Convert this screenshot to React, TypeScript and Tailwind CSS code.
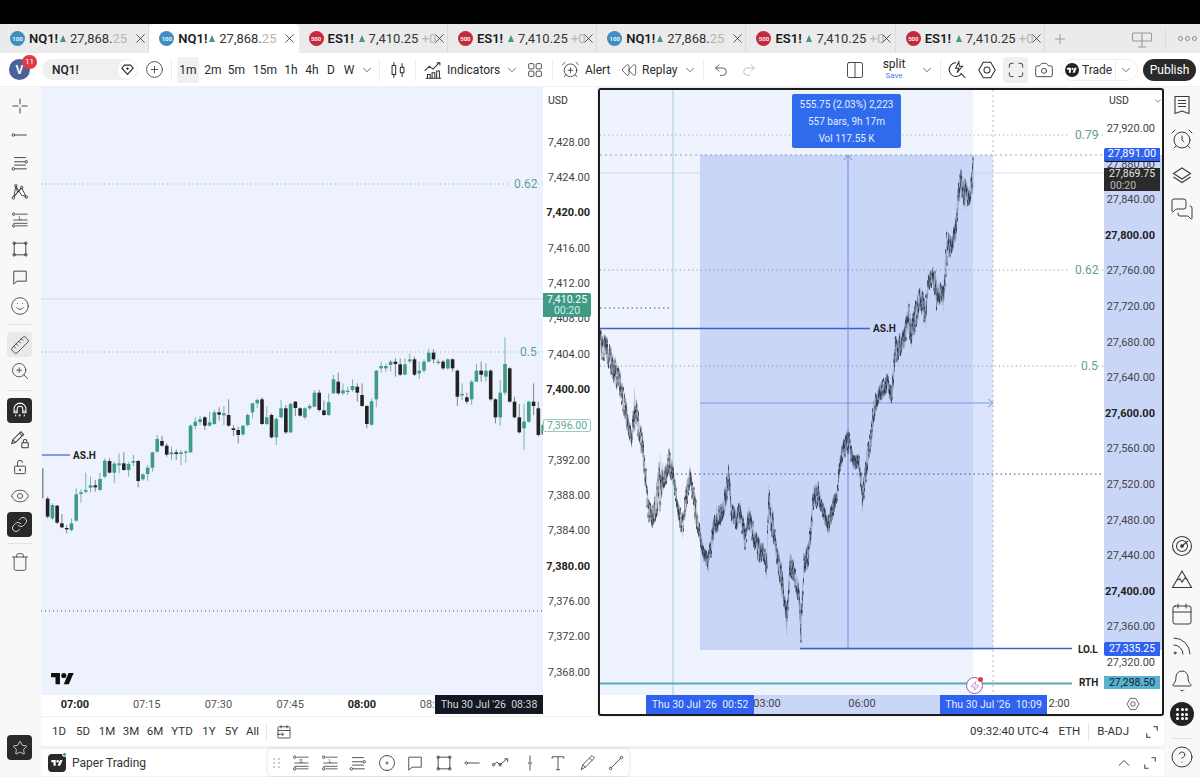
import type { ReactNode } from "react";
import {
  AlarmClock,
  AlarmClockPlus,
  Bell,
  Calendar,
  Camera,
  ChevronDown,
  ChevronUp,
  CircleHelp,
  CirclePlus,
  Columns2,
  Eye,
  Link,
  MessagesSquare,
  Plus,
  Redo2,
  Rewind,
  Rss,
  Ruler,
  Smile,
  Star,
  Trash,
  Undo2,
  X,
  Zap,
  ZoomIn,
} from "lucide-react";

// small line icon on a 24 box
function Ico({ children, className = "h-5 w-5" }: { children: ReactNode; className?: string }) {
  return (
    <svg viewBox="0 0 24 24" fill="none" stroke="currentColor" strokeWidth={1.1} className={className}>
      {children}
    </svg>
  );
}

function TvLogo({ className }: { className: string }) {
  return (
    <svg viewBox="0 0 36 22" fill="currentColor" className={className}>
      <path d="M14 21H7V10H0V3h14v18zM28 21h-8l7.5-18h8L28 21z" />
      <circle cx="20" cy="7" r="4" />
    </svg>
  );
}

const Dot = ({ x, y }: { x: number; y: number }) => <circle cx={x} cy={y} r={1.5} />;

const IconLine = () => (
  <Ico><Dot x={4} y={12} /><path d="M5.5 12H20" /></Ico>
);
const IconFork = () => (
  <Ico><path d="M5 5.5h14M5 10.5h13M5 14.5h14M6 19h14" /><Dot x={19.5} y={10.5} /><Dot x={4} y={19} /></Ico>
);
const IconXabcd = () => (
  <Ico>
    <path d="M7 5l-2.5 13L9 12l5-5 5 10M7 5l7 11 5 1M9 12L7 5M14 7L4.5 18" />
    <Dot x={7} y={4.5} /><Dot x={14} y={6.5} /><Dot x={4} y={19} /><Dot x={19.5} y={18} />
  </Ico>
);
const IconLong = ({ letter }: { letter: string }) => (
  <Ico>
    <path d="M7 5h14M4 12h17M7 19h14M4 16h17" strokeWidth={1} />
    <Dot x={4.5} y={5} /><Dot x={4.5} y={19} />
    <text x={12} y={12} fontSize={7} fill="currentColor" stroke="none" textAnchor="middle">{letter}</text>
  </Ico>
);
const IconRect = () => (
  <Ico><rect x={5} y={5} width={14} height={14} /><Dot x={5} y={5} /><Dot x={19} y={5} /><Dot x={5} y={19} /><Dot x={19} y={19} /></Ico>
);
const IconComment = () => (
  <Ico><path d="M4.5 5h15v12H8.5l-4 3.5z" /></Ico>
);
const IconPath = () => (
  <Ico><path d="M3 14l4-3 4 3 8-7M16 7h4v4" /><Dot x={3} y={14} /><Dot x={11} y={14} /></Ico>
);
const IconVert = () => (
  <Ico><path d="M12 3v6.5M12 14.5V21" /><Dot x={12} y={12} /></Ico>
);
const IconText = () => (
  <Ico><path d="M5 7V4.5h14V7M12 4.5V20M9.5 20h5" /></Ico>
);
const IconBrush = () => (
  <Ico><path d="M5 20l2-6L18 3l3 3-11 11zM7 14l3 3M15 6l3 3" /></Ico>
);
const IconRay = () => (
  <Ico><path d="M6.5 17.5L17.5 6.5" /><Dot x={5.5} y={18.5} /><Dot x={18.5} y={5.5} /></Ico>
);
const IconMagnet = () => (
  <Ico className="h-[22px] w-[22px]">
    <path d="M5.5 15V11a6.5 6.5 0 0 1 13 0v4h-3.5v-4a3 3 0 0 0-6 0v4zM5.5 13h3.5M15 13h3.5M7 17l.6 2M17 17l-.6 2M11 17l.5 1.5 1-1.5" />
  </Ico>
);
const IconPencilLock = () => (
  <Ico className="h-[22px] w-[22px]">
    <path d="M3 17l1-4 9-9 3 3-9 9zM4 13l3 3M11.5 5.5l3 3" />
    <rect x={14} y={16} width={7} height={5.5} rx={0.5} />
    <path d="M15.5 16v-1.5a2 2 0 0 1 4 0V16" />
  </Ico>
);
const IconLockOpen = () => (
  <Ico>
    <rect x={5.5} y={11} width={13} height={9} rx={1} />
    <path d="M9 11V7a3 3 0 0 1 6 0" />
    <circle cx={12} cy={15.5} r={0.8} fill="currentColor" />
  </Ico>
);
const IconDiamond = () => (
  <Ico className="h-[15px] w-[15px]">
    <path d="M3 10l4-5h10l4 5-9 10z" strokeWidth={1.8} />
    <circle cx={12} cy={10.5} r={1.5} fill="currentColor" />
  </Ico>
);
const IconCandles = () => (
  <Ico className="h-[22px] w-[22px]">
    <rect x={5.5} y={7} width={4} height={10} rx={0.5} />
    <path d="M7.5 3.5V7M7.5 17v3.5M16.5 4.5V9M16.5 15v4.5" />
    <rect x={14.5} y={9} width={4} height={6} rx={0.5} />
  </Ico>
);
const IconIndicators = () => (
  <Ico className="h-[22px] w-[22px]">
    <path d="M3 13l5-5 4 3 7-7M16 4h3.5v3" />
    <path d="M6 21v-4h3v4M11 21v-6h3v6M16 21v-8h3v8M4 21h17" />
  </Ico>
);
const IconGrid = () => (
  <Ico className="h-[18px] w-[18px]">
    <rect x={3.5} y={3.5} width={7} height={7} rx={1.4} />
    <rect x={13.5} y={3.5} width={7} height={7} rx={1.4} />
    <rect x={3.5} y={13.5} width={7} height={7} rx={1.4} />
    <rect x={13.5} y={13.5} width={7} height={7} rx={1.4} />
  </Ico>
);
const IconQuick = () => (
  <Ico className="h-[22px] w-[22px]">
    <path d="M11 4a7.5 7.5 0 1 0 6 12M16 15.5l5 5" />
    <path d="M14 3l-3.5 7h3.5l-2 5 6-7h-3.5z" />
  </Ico>
);
const IconHex = ({ className = "h-[22px] w-[22px]" }: { className?: string }) => (
  <Ico className={className}>
    <path d="M8 3.5h8l5 8.5-5 8.5H8L3 12z" />
    <circle cx={12} cy={12} r={3.3} />
  </Ico>
);
const IconCorners = ({ className = "h-[20px] w-[20px]" }: { className?: string }) => (
  <Ico className={className}>
    <path d="M4 9V6.5A2.5 2.5 0 0 1 6.5 4H9M15 4h2.5A2.5 2.5 0 0 1 20 6.5V9M20 15v2.5a2.5 2.5 0 0 1-2.5 2.5H15M9 20H6.5A2.5 2.5 0 0 1 4 17.5V15" />
  </Ico>
);
const IconExpand = () => (
  <Ico className="h-[18px] w-[18px]">
    <path d="M14 5h5v5M5 14v5h5" strokeWidth={1.4} />
  </Ico>
);
const IconBoard = () => (
  <Ico className="h-[24px] w-[24px]">
    <rect x={2.5} y={6} width={19} height={8} rx={1} />
    <path d="M12 6v14M8 20h8" />
  </Ico>
);
const IconWatch = () => (
  <Ico className="h-[24px] w-[24px]">
    <path d="M5 3.5h14v17l-7-2.5-7 2.5zM8 7.5h8M8 10.5h8M8 13.5h8" />
  </Ico>
);
const IconLayers = () => (
  <Ico className="h-[24px] w-[24px]">
    <path d="M12 5l8.5 5.5L12 16l-8.5-5.5zM3.5 14l8.5 5.5 8.5-5.5" />
  </Ico>
);
const IconRadar = () => (
  <Ico className="h-[24px] w-[24px]">
    <circle cx={12} cy={12} r={9.5} />
    <circle cx={12} cy={12} r={5.5} />
    <circle cx={12} cy={12} r={1.3} fill="currentColor" />
    <path d="M12 12l6-5" />
  </Ico>
);
const IconPeaks = () => (
  <Ico className="h-[24px] w-[24px]">
    <path d="M2.5 20.5L12 4l9.5 16.5zM7 13l3-1 2 3 3-4 3 2" />
  </Ico>
);

const iconClass = "h-5 w-5";

function ToolBtn({ children }: { children: ReactNode }) {
  return <div className="flex h-[28.5px] w-full items-center justify-center text-[#3a3a3a]">{children}</div>;
}

function Sep() {
  return <div className="mx-auto my-[4px] h-px w-[26px] bg-[#e3e3e3]" />;
}

const TABS = [
  { sym: "NQ1!", price: "27,868.", tail: "25", red: false, active: false },
  { sym: "NQ1!", price: "27,868.", tail: "25", red: false, active: true },
  { sym: "ES1!", price: "7,410.25", tail: " +0", red: true, active: false },
  { sym: "ES1!", price: "7,410.25", tail: " +0", red: true, active: false },
  { sym: "NQ1!", price: "27,868.", tail: "25", red: false, active: false },
  { sym: "ES1!", price: "7,410.25", tail: " +0", red: true, active: false },
  { sym: "ES1!", price: "7,410.25", tail: " +0", red: true, active: false },
];

function Tabs() {
  return (
    <div className="flex h-[29px] shrink-0 items-stretch bg-[#ebebeb] text-[13px]">
      {TABS.map((t, i) => (
        <div
          key={i}
          className={`flex w-[149.3px] items-center pl-[10px] ${
            t.active ? "rounded-t-[5px] bg-white" : "border-r border-[#dcdcdc]"
          }`}
        >
          <span
            className={`flex h-[15px] w-[15px] shrink-0 items-center justify-center rounded-full text-[6px] font-semibold text-white ${
              t.red ? "bg-[#c42a3c]" : "bg-[#3c8fbe]"
            }`}
          >
            {t.red ? "500" : "100"}
          </span>
          <span className="ml-[4px] w-[26px] font-semibold text-[#1b1b1b]">{t.sym}</span>
          <span className="ml-[5px] h-0 w-0 border-x-[3.5px] border-b-[7px] border-x-transparent border-b-[#3f9a86]" />
          <span className="ml-[4px] w-[62px] whitespace-pre text-[#333]">
            {t.price}
            <span className="text-[#b5b5b5]">{t.tail}</span>
          </span>
          <X className="ml-[1px] h-[15px] w-[15px] shrink-0 text-[#333]" strokeWidth={1.3} />
        </div>
      ))}
      <div className="flex flex-1 items-center text-[#777]">
        <Plus className="ml-[7px] h-[16px] w-[16px]" strokeWidth={1} />
        <div className="ml-[62px] text-[#999]"><IconBoard /></div>
        <div className="ml-[11px] h-[22px] w-px bg-[#dcdcdc]" />
        <div className="ml-[12px] flex gap-[2px]">
          <span className="h-[5px] w-[5px] rounded-full border border-[#888]" />
          <span className="h-[5px] w-[5px] rounded-full border border-[#888]" />
          <span className="h-[5px] w-[5px] rounded-full border border-[#888]" />
        </div>
      </div>
    </div>
  );
}

const VDiv = ({ className }: { className: string }) => <div className={`h-[22px] w-px bg-[#ececec] ${className}`} />;
const Chev = ({ className }: { className: string }) => (
  <ChevronDown className={`h-[14px] w-[14px] text-[#444] ${className}`} strokeWidth={1.3} />
);

function TopBar() {
  return (
    <div className="flex h-[33px] shrink-0 items-center bg-white pl-[9px] pr-[4px] text-[12px] text-[#2b2b2b]">
      <div className="relative h-[21px] w-[23px]">
        <div className="flex h-[21px] w-[21px] items-center justify-center rounded-full bg-[#4a6298] text-[12px] font-semibold text-white">
          V
        </div>
        <div className="absolute left-[13px] top-[-4px] flex h-[14px] w-[15px] items-center justify-center rounded-full bg-[#e23a45] text-[8px] text-white">
          11
        </div>
      </div>
      <div className="ml-[10px] flex h-[21px] w-[96px] items-center justify-between rounded-full bg-[#f0f0f0] pl-[10px] pr-[1px]">
        <span className="font-semibold">NQ1!</span>
        <span className="flex h-[19px] w-[19px] items-center justify-center rounded-full bg-white"><IconDiamond /></span>
      </div>
      <CirclePlus className="ml-[7px] h-[19px] w-[19px]" strokeWidth={1} />
      <VDiv className="ml-[7px]" />
      <div className="ml-[5px] flex h-[26px] w-[22px] items-center justify-center rounded-[3px] bg-[#f0f0f0]">1m</div>
      <div className="ml-[3px] w-[22px] text-center">2m</div>
      <div className="w-[25px] text-center">5m</div>
      <div className="w-[32px] text-center">15m</div>
      <div className="w-[20px] text-center">1h</div>
      <div className="w-[22px] text-center">4h</div>
      <div className="w-[16px] text-center">D</div>
      <div className="w-[20px] text-center">W</div>
      <Chev className="ml-[1px]" />
      <VDiv className="ml-[5px]" />
      <div className="ml-[7px]"><IconCandles /></div>
      <VDiv className="ml-[6px]" />
      <div className="ml-[6px]"><IconIndicators /></div>
      <span className="ml-[3px] w-[48px]">Indicators</span>
      <Chev className="ml-[10px]" />
      <div className="ml-[7px]"><IconGrid /></div>
      <VDiv className="ml-[8px]" />
      <AlarmClockPlus className="ml-[8px] h-[19px] w-[19px]" strokeWidth={1} />
      <span className="ml-[5px] w-[23px]">Alert</span>
      <Rewind className="ml-[13px] h-[16px] w-[16px]" strokeWidth={1.1} />
      <span className="ml-[5px] w-[32px]">Replay</span>
      <Chev className="ml-[9px]" />
      <VDiv className="ml-[6px]" />
      <Undo2 className="ml-[9px] h-[16px] w-[16px]" strokeWidth={1.1} />
      <Redo2 className="ml-[12px] h-[16px] w-[16px] text-[#aaa]" strokeWidth={1.1} />
      <div className="ml-auto flex items-center">
        <Columns2 className="h-[20px] w-[20px]" strokeWidth={1} />
        <div className="ml-[14px] w-[30px] text-center leading-[11px]">
          <div>split</div>
          <div className="text-[8px] text-[#4f7ef0]">Save</div>
        </div>
        <Chev className="ml-[11px]" />
        <VDiv className="ml-[6px]" />
        <div className="ml-[5px]"><IconQuick /></div>
        <div className="ml-[8px]"><IconHex /></div>
        <div className="ml-[5px] flex h-[26px] w-[25px] items-center justify-center rounded-[3px] bg-[#f0f0f0]"><IconCorners /></div>
        <Camera className="ml-[6px] h-[20px] w-[20px]" strokeWidth={1} />
        <div className="ml-[7px] flex h-[22px] w-[77px] items-center rounded-full border border-[#f0f0f0] pl-[3px]">
          <span className="flex h-[14px] w-[14px] items-center justify-center rounded-full bg-[#222] text-white"><TvLogo className="h-[6px] w-[10px]" /></span>
          <span className="ml-[3px] w-[27px]">Trade</span>
          <VDiv className="ml-[6px]" />
          <Chev className="ml-[3px]" />
        </div>
        <div className="ml-[5px] flex h-[22px] w-[53px] items-center justify-center rounded-full bg-[#2a2a2a] text-[12px] text-white">Publish</div>
      </div>
    </div>
  );
}

function LeftBar() {
  return (
    <aside className="flex w-[41px] shrink-0 flex-col bg-[#f8f8f8] pt-[5px] pr-[2px] pb-[17px]">
      <ToolBtn><Ico><path d="M12 3v7M12 14v7M3 12h7M14 12h7" /></Ico></ToolBtn>
      <ToolBtn><IconLine /></ToolBtn>
      <ToolBtn><IconFork /></ToolBtn>
      <ToolBtn><IconXabcd /></ToolBtn>
      <ToolBtn><IconLong letter="L" /></ToolBtn>
      <ToolBtn><IconRect /></ToolBtn>
      <ToolBtn><IconComment /></ToolBtn>
      <ToolBtn><Smile className={iconClass} strokeWidth={1} /></ToolBtn>
      <Sep />
      <div className="mx-auto mt-[3px] flex h-[25px] w-[25px] items-center justify-center rounded-[4px] bg-[#e9e9e9] text-[#333]">
        <Ruler className="h-[20px] w-[20px] -scale-x-100" strokeWidth={1} />
      </div>
      <ToolBtn><ZoomIn className={iconClass} strokeWidth={1} /></ToolBtn>
      <Sep />
      <div className="mx-auto mt-[3px] flex h-[25px] w-[25px] items-center justify-center rounded-[4px] bg-[#2a2a2a] text-white"><IconMagnet /></div>
      <div className="mt-[2px]" />
      <ToolBtn><IconPencilLock /></ToolBtn>
      <ToolBtn><IconLockOpen /></ToolBtn>
      <ToolBtn><Eye className={iconClass} strokeWidth={1} /></ToolBtn>
      <div className="mx-auto mt-[2px] flex h-[25px] w-[25px] items-center justify-center rounded-[4px] bg-[#2a2a2a] text-white">
        <Link className="h-[17px] w-[17px]" strokeWidth={1.1} />
      </div>
      <div className="mt-[2px]" />
      <Sep />
      <ToolBtn><Trash className={iconClass} strokeWidth={1} /></ToolBtn>
      <div className="mx-auto mt-auto flex h-[25px] w-[25px] items-center justify-center rounded-[4px] bg-[#2a2a2a] text-white">
        <Star className="h-[16px] w-[16px]" strokeWidth={1.1} />
      </div>
    </aside>
  );
}

// candles read off the reference: green?, body top, body bottom, wick top, wick bottom (crop coordinates)
const CANDLES: [number, number, number, number, number][] = [
  [0,415,505,415,505],[0,506,560,500,565],[1,525,565,520,570],[0,527,578,525,582],[0,580,592,552,595],
  [0,594,598,585,610],[1,580,600,565,605],[1,493,572,475,575],[1,487,492,478,518],[1,480,485,428,490],
  [1,466,473,440,487],[0,466,472,450,485],[1,447,480,428,482],[1,392,440,385,445],[0,393,428,385,430],
  [1,401,428,395,460],[1,400,406,370,430],[0,400,420,367,422],[1,402,420,395,440],[1,393,398,375,410],
  [0,393,453,390,472],[1,433,448,430,452],[1,413,432,405,452],[1,367,413,365,425],[1,327,365,315,368],
  [0,333,347,318,350],[0,347,374,340,380],[1,367,373,350,390],[0,367,372,358,390],[1,367,372,360,405],
  [1,365,368,360,398],[1,287,367,283,368],[1,275,288,262,298],[1,268,276,258,285],[0,262,287,258,300],
  [1,277,287,245,290],[1,247,282,240,285],[0,247,254,232,272],[1,250,256,228,285],[0,255,287,208,290],
  [0,295,300,285,318],[0,300,315,290,340],[1,287,313,285,318],[1,255,285,250,290],[1,220,247,218,265],
  [1,210,220,205,235],[0,208,282,202,285],[1,262,282,228,285],[0,255,322,250,325],[1,267,322,262,345],
  [1,235,262,210,265],[0,235,307,225,312],[1,222,307,218,310],[0,215,234,213,258],[0,235,257,232,260],
  [1,235,262,232,268],[1,228,235,222,240],[1,188,230,180,232],[0,188,240,180,245],[0,241,255,212,258],
  [1,217,255,190,258],[1,148,190,135,192],[0,155,190,128,195],[1,181,190,160,195],[1,182,186,170,195],
  [1,168,180,148,185],[0,170,188,160,215],[0,195,228,160,230],[0,228,282,225,295],[1,214,284,205,288],
  [1,122,208,120,232],[1,108,115,95,128],[1,108,115,100,125],[1,95,105,90,125],[0,95,102,85,140],
  [0,103,134,85,138],[1,103,134,85,135],[1,88,94,70,100],[0,88,134,80,138],[1,122,130,95,147],
  [1,95,122,88,128],[1,68,95,57,97],[0,68,88,57,100],[1,95,97,88,105],[0,95,115,90,120],
  [1,88,115,85,120],[0,88,115,85,125],[0,122,200,118,228],[1,192,196,160,210],[0,202,215,188,222],
  [1,155,208,150,225],[1,122,155,102,155],[0,122,134,95,155],[1,122,140,100,155],[0,122,208,118,212],
  [0,208,262,205,280],[1,188,262,150,288],[1,102,188,22,195],[0,115,215,112,218],[0,215,262,200,265],
  [0,262,307,222,310],[1,275,295,222,360],[1,215,275,212,278],[0,215,228,160,255],[0,235,315,215,320],
  [1,285,313,280,316],
];

function LeftPlotSvg() {
  const cy = (v: number) => 330 + v / 3;
  const cx = (i: number) => 40 + (8 + 13.34 * i) / 2.8;
  return (
    <svg viewBox="41 87 502 608" className="absolute inset-0 h-full w-full">
      <path d="M41 184H510M538 184H543" stroke="#7fb3a8" strokeWidth={1} strokeDasharray="1 3.2" />
      <path d="M41 352H517M538 352H543" stroke="#7fb3a8" strokeWidth={1} strokeDasharray="1 3.2" />
      <path d="M41 299H543" stroke="#d6dae8" strokeWidth={1} />
      <path d="M41 611H543" stroke="#4a5a78" strokeWidth={1} strokeDasharray="1 3" />
      <path d="M42 455H70" stroke="#3f63c8" strokeWidth={1.2} />
      {CANDLES.map(([g, bt, bb, wt, wb], i) => {
        const c = g ? "#3f9a86" : "#222222";
        return (
          <g key={i}>
            <path d={`M${cx(i)} ${cy(wt)}V${cy(wb)}`} stroke={g ? "#4b9887" : "#555555"} strokeWidth={i === 0 ? 1 : 0.7} />
            {i > 0 && <rect x={cx(i) - 1.8} y={cy(bt)} width={3.6} height={Math.max(1.2, (bb - bt) / 3)} fill={c} />}
          </g>
        );
      })}
    </svg>
  );
}

// envelope of the dense right chart: x, top, bottom in screen pixels
const ENV: [number, number, number][] = [
  ...[
    [0,30,110],[20,50,130],[40,100,190],[60,150,230],[80,250,330],[95,340,385],[103,205,330],[115,270,350],
    [130,350,450],[145,530,600],[157,570,625],[170,490,590],[180,400,580],[195,440,500],[207,385,470],[220,440,500],
    [235,550,600],[248,580,655],[260,480,570],[270,435,490],[285,520,610],[295,590,650],[310,680,720],[325,700,760],
    [340,600,670],[350,560,640],[365,550,610],[380,470,560],[386,430,500],[395,550,610],[410,570,630],[420,540,610],
    [435,620,690],[447,560,620],[460,610,680],[475,650,730],[490,670,720],[500,700,775],[506,495,600],[520,580,670],
    [530,680,730],[545,730,830],[555,830,880],[560,850,945],[570,700,770],[580,720,780],[595,780,850],[603,880,965],
    [612,700,760],[625,670,745],[632,600,670],[640,500,570],[655,480,560],[665,540,580],[685,590,650],[700,530,590],
    [712,500,540],[718,410,460],[730,360,420],[745,325,400],[760,410,450],[778,400,445],[787,500,580],[800,390,470],
    [812,330,400],[820,240,310],[835,200,250],[860,160,220],[875,200,250],
  ].map(([x, t, b]) => [600 + x / 3, 320 + t / 3, 320 + b / 3] as [number, number, number]),
  ...[
    [165,740,830],[190,720,780],[205,630,730],[215,690,775],[225,640,730],[240,590,660],[258,620,715],[265,550,600],
    [280,530,590],[290,560,665],[300,580,640],[310,590,665],[320,420,530],[335,440,490],[348,380,450],[355,280,360],
    [362,235,310],[375,270,360],[390,290,340],[400,195,300],
  ].map(([x, t, b]) => [840 + x / 3, 90 + t / 3, 90 + b / 3] as [number, number, number]),
];

function buildBars() {
  let s = 12345;
  const rnd = () => {
    s = (s * 1664525 + 1013904223) >>> 0;
    return s / 4294967296;
  };
  let band = "";
  let wicks = "";
  let bodies = "";
  let k = 0;
  for (let x = 600; x <= 973; x += 0.5) {
    while (k < ENV.length - 2 && ENV[k + 1][0] < x) k++;
    const [x0, t0, b0] = ENV[k];
    const [x1, t1, b1] = ENV[k + 1];
    const f = Math.min(1, Math.max(0, (x - x0) / (x1 - x0)));
    const top = t0 + (t1 - t0) * f;
    const bot = b0 + (b1 - b0) * f;
    const h = bot - top;
    const c = top + h * rnd();
    const hi = Math.max(top, c - 2 - rnd() * 8);
    const lo = Math.min(bot, c + 2 + rnd() * 8);
    wicks += `M${x.toFixed(2)} ${hi.toFixed(1)}V${lo.toFixed(1)}`;
    bodies += `M${x.toFixed(2)} ${(c - 1.5).toFixed(1)}V${(c + 1.5).toFixed(1)}`;
    // thin band that ties neighbouring bars together, cut short at random
    band += `M${x.toFixed(2)} ${(top + h * 0.35 * rnd()).toFixed(1)}V${(bot - h * 0.35 * rnd()).toFixed(1)}`;
  }
  // extremes of every swing are always drawn
  for (const [x, t, b] of ENV) band += `M${x.toFixed(2)} ${t.toFixed(1)}V${b.toFixed(1)}`;
  return { band, wicks, bodies };
}

const BARS = buildBars();

function RightPlotSvg() {
  return (
    <svg viewBox="600 90 504 605" className="absolute inset-0 h-full w-full">
      <rect x={600} y={90} width={373} height={605} fill="#eef3fe" />
      <rect x={700} y={155} width={293} height={495} fill="#dbe4fc" />
      <rect x={700} y={155} width={273} height={495} fill="#c9d6f8" />
      <path d="M600 135H1070M1098 135H1104" stroke="#7da79f" strokeWidth={1} strokeDasharray="1 3.2" />
      <path d="M600 155H1104" stroke="#7d89a3" strokeWidth={0.8} strokeDasharray="2 3" />
      <path d="M600 173H1104" stroke="#ccd1e0" strokeWidth={0.7} />
      <path d="M600 270H1070M1098 270H1104" stroke="#67908f" strokeWidth={1} strokeDasharray="1 3.2" />
      <path d="M600 366H1078M1098 366H1104" stroke="#67908f" strokeWidth={1} strokeDasharray="1 3.2" />
      <path d="M600 308H671" stroke="#35528f" strokeWidth={1} strokeDasharray="1.5 3" />
      <path d="M672 474H1104" stroke="#35528f" strokeWidth={1} strokeDasharray="1.5 3" />
      <path d="M673 90V695" stroke="#a5cdd8" strokeWidth={1} />
      <path d="M993 90V695" stroke="#b3b8c4" strokeWidth={1} strokeDasharray="2 3" />
      <path d="M600 328.5H870" stroke="#3d5fc9" strokeWidth={1.5} />
      <path d="M700 403H993M988 399l5 4-5 4" stroke="#7f97e2" strokeWidth={1} fill="none" />
      <path d="M848 650V155M844 160l4-5 4 5" stroke="#6f8be0" strokeWidth={1} fill="none" />
      <path d={BARS.band} stroke="#33455c" strokeWidth={0.35} opacity={0.4} />
      <path d={BARS.wicks} stroke="#243347" strokeWidth={0.55} opacity={0.8} />
      <path d={BARS.bodies} stroke="#141e2a" strokeWidth={0.7} opacity={0.85} />
      <path d="M800 648.5H1072" stroke="#3d5fc9" strokeWidth={1.5} />
      <path d="M600 683.5H1072" stroke="#58aebd" strokeWidth={2} />
    </svg>
  );
}

const LEFT_PRICES = ["7,428.00","7,424.00","7,420.00","7,416.00","7,412.00","7,408.00","7,404.00","7,400.00","7,396.00","7,392.00","7,388.00","7,384.00","7,380.00","7,376.00","7,372.00","7,368.00"];
const RIGHT_PRICES = ["27,920.00","27,880.00","27,840.00","27,800.00","27,760.00","27,720.00","27,680.00","27,640.00","27,600.00","27,560.00","27,520.00","27,480.00","27,440.00","27,400.00","27,360.00","27,320.00"];
const LEFT_BOLD = new Set(["7,420.00", "7,400.00", "7,380.00"]);
const RIGHT_BOLD = new Set(["27,800.00", "27,600.00", "27,400.00"]);

function LeftChart() {
  return (
    <div className="flex h-full w-[556px] shrink-0 flex-col bg-white">
      <div className="flex h-[608px] items-stretch">
        <div className="relative w-[502px] overflow-hidden bg-[#eef2fe]">
          <LeftPlotSvg />
          <span className="absolute left-[473px] top-[90px] text-[12px] leading-[14px] text-[#5f9f93]">0.62</span>
          <span className="absolute left-[479px] top-[258px] text-[12px] leading-[14px] text-[#5f9f93]">0.5</span>
          <span className="absolute left-[32px] top-[362px] text-[10px] font-bold leading-[14px] text-[#222]">AS.H</span>
          <TvLogo className="absolute left-[10px] top-[584px] h-[14px] w-[23px] text-[#111]" />
        </div>
        <div className="relative flex-1 text-[11px] text-[#444]">
          <div className="absolute left-[5px] top-[8px] text-[10.5px] leading-[12px] text-[#333]">USD</div>
          <div className="absolute inset-x-0 top-[38.3px]">
            {LEFT_PRICES.map((p) => (
              <div
                key={p}
                className={`flex h-[35.33px] items-center justify-end pr-[7px] ${LEFT_BOLD.has(p) ? "font-bold text-[#222]" : ""}`}
              >
                {p}
              </div>
            ))}
          </div>
          <div className="absolute left-0 top-[206px] flex h-[24px] w-[48px] flex-col items-center justify-center rounded-r-[2px] bg-[#3f9a86] text-[10.5px] leading-[11.5px] text-white">
            <span>7,410.25</span>
            <span className="text-[#d9ede8]">00:20</span>
          </div>
          <div className="absolute left-0 top-[332px] flex h-[13px] w-[48px] items-center justify-center rounded-[2px] border border-[#9dcbc0] bg-white text-[10.5px] text-[#5fa898]">
            7,396.00
          </div>
        </div>
      </div>
      <div className="relative flex h-[21px] items-center overflow-hidden text-[11px] text-[#555]">
        <div className="ml-[-2px] flex">
          {["07:00", "07:15", "07:30", "07:45", "08:00"].map((t) => (
            <div key={t} className={`w-[71.75px] text-center ${t === "07:00" || t === "08:00" ? "font-bold text-[#222]" : ""}`}>{t}</div>
          ))}
          <div className="pl-[22px]">08:</div>
        </div>
        <div className="absolute left-[394px] top-0 flex h-[19px] w-[108px] items-center justify-center bg-[#131722] text-[10.5px] text-[#d8d8d8]">
          Thu 30 Jul '26 &nbsp;08:38
        </div>
      </div>
    </div>
  );
}

function RightChart() {
  return (
    <div className="ml-px mt-px flex h-[628px] w-[566px] shrink-0 flex-col overflow-hidden rounded-[3px] border-2 border-[#1c1c1c] bg-white">
      <div className="flex h-[605px] items-stretch">
        <div className="relative w-[504px] overflow-hidden">
          <RightPlotSvg />
          <span className="absolute left-[475px] top-[38px] text-[12px] leading-[14px] text-[#5f9f93]">0.79</span>
          <span className="absolute left-[475px] top-[173px] text-[12px] leading-[14px] text-[#5f9f93]">0.62</span>
          <span className="absolute left-[481px] top-[269px] text-[12px] leading-[14px] text-[#5f9f93]">0.5</span>
          <span className="absolute left-[273px] top-[232px] text-[10px] font-bold leading-[14px] text-[#222]">AS.H</span>
          <span className="absolute left-[478px] top-[553px] text-[10px] font-bold leading-[14px] text-[#222]">LO.L</span>
          <span className="absolute left-[479px] top-[586px] text-[10px] font-bold leading-[14px] text-[#222]">RTH</span>
          <div className="absolute left-[192px] top-[4px] flex h-[54px] w-[109px] flex-col items-center justify-center rounded-[2px] bg-[#2f6bec] text-[10px] leading-[17px] text-[#e6edff]">
            <span>555.75 (2.03%) 2,223</span>
            <span>557 bars, 9h 17m</span>
            <span>Vol 117.55 K</span>
          </div>
          <div className="absolute left-[366px] top-[587px] flex h-[17px] w-[17px] items-center justify-center rounded-full border border-[#9c4fb5] bg-white text-[#9c4fb5]">
            <Zap className="h-[10px] w-[10px]" strokeWidth={1.4} />
            <span className="absolute right-[-1px] top-[-1px] h-[5px] w-[5px] rounded-full bg-[#e23a45]" />
          </div>
        </div>
        <div className="relative flex-1 text-[11px] text-[#444]">
          <div className="absolute inset-x-0 top-[65px] h-[495px] bg-[#c9d6f8]" />
          <div className="absolute left-[5px] top-[5px] flex w-[54px] items-center justify-between text-[10.5px] leading-[12px] text-[#333]">
            USD
            <ChevronDown className="h-[10px] w-[10px]" strokeWidth={1.3} />
          </div>
          <div className="absolute inset-x-0 top-[21.5px]">
            {RIGHT_PRICES.map((p) => (
              <div
                key={p}
                className={`flex h-[35.6px] items-center justify-end pr-[7px] ${RIGHT_BOLD.has(p) ? "font-bold text-[#222]" : ""}`}
              >
                {p}
              </div>
            ))}
          </div>
          <div className="absolute left-0 top-[58px] flex h-[14px] w-[56px] items-center justify-center rounded-l-[2px] border-b border-[#111] bg-[#2f62ee] text-[11px] text-white">27,891.00</div>
          <div className="absolute left-0 top-[78px] flex h-[23px] w-[56px] flex-col items-center justify-center bg-[#2a2a2a] text-[10.5px] leading-[11.5px] text-[#e5e5e5]">
            <span>27,869.75</span>
            <span className="self-start pl-[6px] text-[#bbb]">00:20</span>
          </div>
          <div className="absolute left-0 top-[552px] flex h-[14px] w-[56px] items-center justify-center rounded-l-[2px] bg-[#2f62ee] text-[10.5px] text-white">27,335.25</div>
          <div className="absolute left-0 top-[586px] flex h-[13px] w-[56px] items-center justify-center bg-[#57b2cd] text-[10.5px] text-[#123]">27,298.50</div>
        </div>
      </div>
      <div className="relative flex h-[19px] items-center overflow-hidden text-[11px] text-[#444]">
        <div className="absolute bottom-0 left-[100px] top-0 w-[293px] bg-[#c9d6f8]" />
        <div className="relative ml-[119.5px] flex">
          <div className="w-[95px] text-center">03:00</div>
          <div className="w-[190px] pr-[95px] text-center">06:00</div>
          <div className="pl-[44px]">2:00</div>
        </div>
        <div className="absolute left-[46px] top-0 flex h-[19px] w-[108px] items-center justify-center bg-[#2f62ee] text-[10.5px] text-[#e6edff]">
          Thu 30 Jul '26 &nbsp;00:52
        </div>
        <div className="absolute left-[340px] top-0 flex h-[19px] w-[107px] items-center justify-center bg-[#2f62ee] text-[10.5px] text-[#e6edff]">
          Thu 30 Jul '26 &nbsp;10:09
        </div>
        <div className="absolute left-[525px] top-[1px] text-[#333]"><IconHex className="h-[16px] w-[16px]" /></div>
      </div>
    </div>
  );
}

function RangeBar() {
  return (
    <div className="mt-px flex h-[29px] shrink-0 items-center rounded-[3px] bg-white text-[11.5px] text-[#333]">
      <div className="ml-[6px] flex">
        <div className="w-[24px] text-center">1D</div>
        <div className="w-[24px] text-center">5D</div>
        <div className="w-[24px] text-center">1M</div>
        <div className="w-[24px] text-center">3M</div>
        <div className="w-[24px] text-center">6M</div>
        <div className="w-[30px] text-center">YTD</div>
        <div className="w-[24px] text-center">1Y</div>
        <div className="w-[21px] text-center">5Y</div>
        <div className="w-[21px] text-center">All</div>
      </div>
      <div className="ml-[3px] h-[18px] w-px bg-[#e8e8e8]" />
      <div className="ml-[8px]"><Ico className="h-[18px] w-[18px]"><rect x={4} y={5} width={16} height={15} rx={1} /><path d="M4 10h16M8 3v4M16 3v4M3 15h8M9 12.5l2.5 2.5L9 17.5" /></Ico></div>
      <div className="ml-auto flex items-center pr-[3px]">
        <span>09:32:40 UTC-4</span>
        <span className="ml-[10px]">ETH</span>
        <div className="ml-[8px] h-[18px] w-px bg-[#e8e8e8]" />
        <span className="ml-[8px]">B-ADJ</span>
        <div className="ml-[14px]"><IconExpand /></div>
      </div>
    </div>
  );
}

function BottomBar() {
  return (
    <div className="mt-[3px] flex h-[27px] shrink-0 items-center rounded-t-[3px] bg-white text-[12px] text-[#333]">
      <div className="relative ml-[7px] flex h-[18px] w-[18px] shrink-0 items-center justify-center rounded-[4px] bg-[#2a2a2a] text-white">
        <TvLogo className="h-[7px] w-[12px]" />
        <span className="absolute right-[-1px] top-[-2px] h-[5px] w-[5px] rounded-full border border-white bg-[#3f9a86]" />
      </div>
      <span className="ml-[6px] w-[67px] shrink-0 whitespace-nowrap">Paper Trading</span>
      <div className="ml-[129px] flex h-full items-center gap-[8.6px] rounded-[4px] bg-white pl-[5px] pr-[3px] text-[#444] shadow-[0_0_3px_rgba(0,0,0,0.18)]">
        <div className="grid w-[8px] grid-cols-2 gap-[2px]">
          {[0, 1, 2, 3, 4, 5].map((i) => <span key={i} className="h-[2px] w-[2px] bg-[#ccc]" />)}
        </div>
        <div className="ml-[1.5px]"><IconLong letter="S" /></div>
        <IconLong letter="L" />
        <IconFork />
        <Ico><circle cx={12} cy={12} r={9} /><circle cx={12} cy={12} r={1.2} /><path d="M12 3v1M12 20v1" /></Ico>
        <IconComment />
        <IconRect />
        <IconLine />
        <IconPath />
        <IconVert />
        <IconText />
        <IconBrush />
        <IconRay />
      </div>
      <div className="ml-auto flex items-center pr-[5px] text-[#444]">
        <ChevronUp className="h-[20px] w-[20px]" strokeWidth={1.2} />
        <div className="ml-[7px]"><IconExpand /></div>
      </div>
    </div>
  );
}

function RightBar() {
  const cls = "h-[24px] w-[24px]";
  return (
    <aside className="flex w-[36px] shrink-0 flex-col items-center bg-[#f8f8f8] pt-[6px] text-[#3a3a3a]">
      <div className="flex h-[24px] items-center"><IconWatch /></div>
      <div className="mt-[10px] flex h-[24px] items-center"><AlarmClock className={cls} strokeWidth={1} /></div>
      <div className="mt-[12px] flex h-[24px] items-center"><IconLayers /></div>
      <div className="mt-[10px] flex h-[24px] items-center"><MessagesSquare className={cls} strokeWidth={1} /></div>
      <div className="mt-auto flex h-[24px] items-center"><IconRadar /></div>
      <div className="mt-[9px] flex h-[24px] items-center"><IconPeaks /></div>
      <div className="mt-[11px] flex h-[24px] items-center"><Calendar className={cls} strokeWidth={1} /></div>
      <div className="mt-[8px] flex h-[24px] items-center"><Rss className={cls} strokeWidth={1} /></div>
      <div className="mt-[11px] flex h-[24px] items-center"><Bell className={cls} strokeWidth={1} /></div>
      <div className="mt-[9px] flex h-[24px] w-[24px] items-center justify-center rounded-full bg-[#222]">
        <div className="grid grid-cols-3 gap-[1.5px]">
          {[0, 1, 2, 3, 4, 5, 6, 7, 8].map((i) => <span key={i} className="h-[3px] w-[3px] rounded-full bg-white" />)}
        </div>
      </div>
      <div className="mt-[12px] h-px w-[22px] bg-[#e3e3e3]" />
      <div className="mb-[8px] mt-[6px] flex h-[24px] items-center"><CircleHelp className={cls} strokeWidth={1} /></div>
    </aside>
  );
}

export default function App() {
  return (
    <div className="flex h-[777px] w-[1200px] flex-col overflow-hidden bg-[#f1f1f1] [font-family:Roboto,'Liberation_Sans',sans-serif]">
      <div className="h-[24px] shrink-0 bg-black" />
      <Tabs />
      <TopBar />
      <div className="flex min-h-0 flex-1 pt-px">
        <LeftBar />
        <div className="flex w-[1123px] shrink-0 flex-col">
          <div className="flex h-[629px] shrink-0">
            <LeftChart />
            <RightChart />
          </div>
          <RangeBar />
          <BottomBar />
        </div>
        <RightBar />
      </div>
    </div>
  );
}
